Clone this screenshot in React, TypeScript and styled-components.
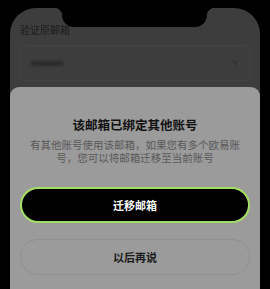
import React from "react";
import styled, { createGlobalStyle } from "styled-components";

const Global = createGlobalStyle`
  html, body { margin: 0; padding: 0; background: #000; }
  body { font-family: "Noto Sans CJK SC", "Noto Sans", sans-serif; }
`;

const Page = styled.div`
  width: 270px;
  height: 289px;
  background: #000;
  padding: 8px 10px 0;
  box-sizing: border-box;
  overflow: hidden;
`;

const Screen = styled.div`
  position: relative;
  height: 281px;
  background: #3d3d3d;
  border-radius: 26px 26px 0 0;
  display: flex;
  flex-direction: column;
  overflow: hidden;
`;

const Notch = styled.div`
  position: absolute;
  top: -2px;
  left: 52px;
  width: 145px;
  height: 21px;
  background: #000;
  border-radius: 0 0 12px 12px;
  &::before, &::after {
    content: "";
    position: absolute;
    top: 2px;
    width: 8px;
    height: 8px;
  }
  &::before {
    left: -8px;
    background: radial-gradient(circle at 0 100%, transparent 8px, #000 8.5px);
  }
  &::after {
    right: -8px;
    background: radial-gradient(circle at 100% 100%, transparent 8px, #000 8.5px);
  }
`;

const Header = styled.div`
  padding: 16px 10px 0;
  display: flex;
  flex-direction: column;
  gap: 9px;
`;

const Label = styled.div`
  font-size: 10px;
  line-height: 12px;
  color: #1c1c1c;
  filter: blur(0.4px);
`;

const Input = styled.div`
  height: 36px;
  border: 1px solid #444;
  border-radius: 5px;
  box-sizing: border-box;
  display: flex;
  align-items: center;
  justify-content: space-between;
  padding: 0 10px;
`;

const Placeholder = styled.div`
  width: 33px;
  height: 5px;
  background: #2c2c2c;
  border-radius: 3px;
  filter: blur(1px);
`;

const Sheet = styled.div`
  margin-top: 6px;
  flex: 1;
  background: #9b9b9b;
  border-radius: 9px 9px 0 0;
  padding: 30px 10px 0;
  display: flex;
  flex-direction: column;
  align-items: stretch;
`;

const Title = styled.div`
  font-size: 12.5px;
  line-height: 16px;
  font-weight: 700;
  color: #111;
  text-align: center;
`;

const Desc = styled.div`
  margin: 5px 8px 0;
  font-size: 10.5px;
  line-height: 13px;
  color: #585858;
  text-align: center;
`;

const Button = styled.div<{ $primary?: boolean }>`
  height: 36px;
  border-radius: 18px;
  box-sizing: border-box;
  display: flex;
  align-items: center;
  justify-content: center;
  font-size: 11px;
  font-weight: 700;
  background: ${(p) => (p.$primary ? "#000" : "transparent")};
  color: ${(p) => (p.$primary ? "#fff" : "#1a1a1a")};
  border: ${(p) => (p.$primary ? "2px solid #a3df62" : "1px solid rgba(0,0,0,0.07)")};
`;

const Buttons = styled.div`
  margin-top: 23px;
  display: flex;
  flex-direction: column;
  gap: 16px;
`;

export default function App() {
  return (
    <>
      <Global />
      <Page>
        <Screen>
          <Notch />
          <Header>
            <Label>验证原邮箱</Label>
            <Input>
              <Placeholder />
              <svg width="8" height="8" viewBox="0 0 8 8" style={{ filter: "blur(0.6px)" }}>
                <path d="M1 1 L4 4 M4 4 L7 2 M4 4 L5 7" stroke="#333" strokeWidth="1.2" fill="none" />
              </svg>
            </Input>
          </Header>
          <Sheet>
            <Title>该邮箱已绑定其他账号</Title>
            <Desc>有其他账号使用该邮箱，如果您有多个欧易账号，您可以将邮箱迁移至当前账号</Desc>
            <Buttons>
              <Button $primary>迁移邮箱</Button>
              <Button>以后再说</Button>
            </Buttons>
          </Sheet>
        </Screen>
      </Page>
    </>
  );
}
